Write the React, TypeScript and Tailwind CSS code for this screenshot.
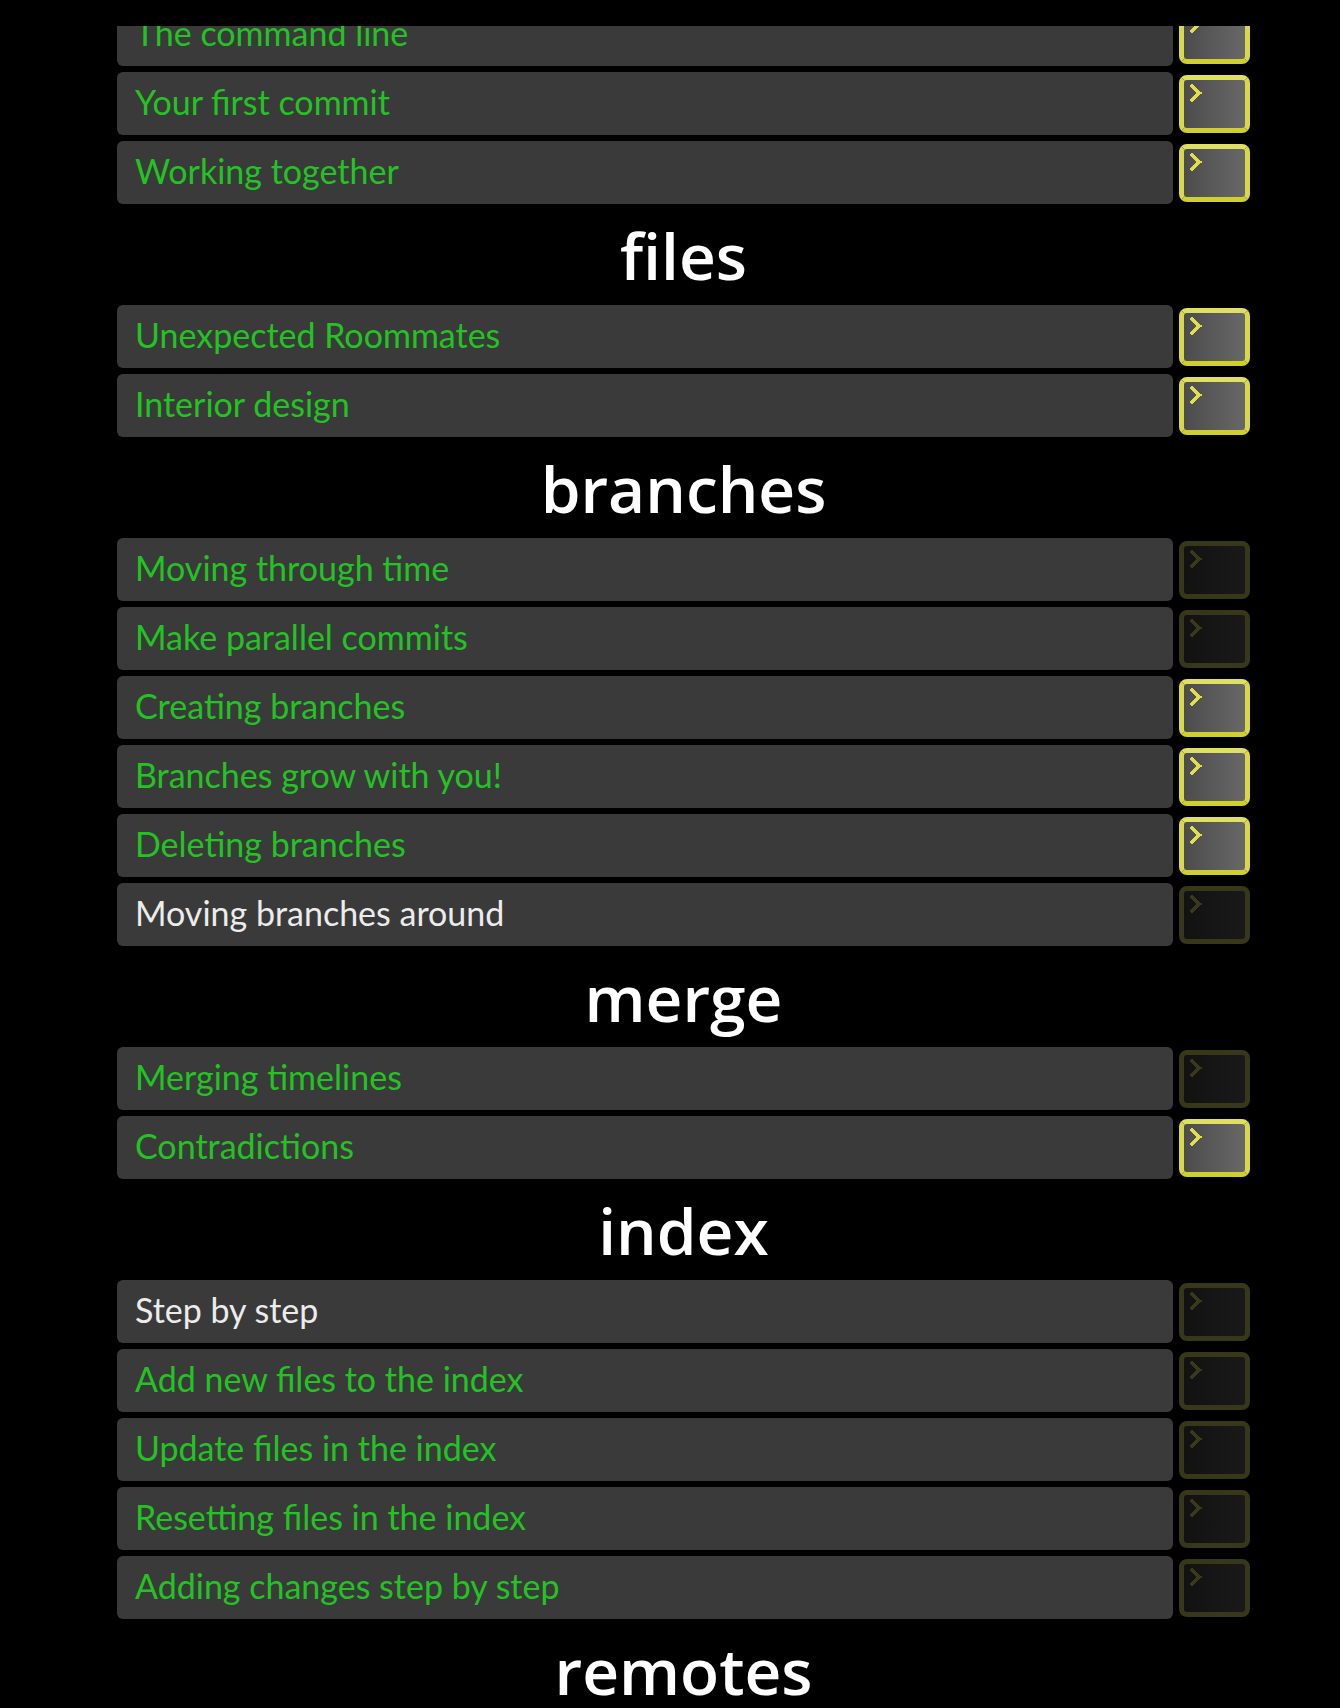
import React from "react";

type Level = { title: string; done: boolean; solved?: boolean };
type Section = { name: string | null; levels: Level[] };

const sections: Section[] = [
  {
    name: null,
    levels: [
      { title: "The command line", done: true },
      { title: "Your first commit", done: true },
      { title: "Working together", done: true },
    ],
  },
  {
    name: "files",
    levels: [
      { title: "Unexpected Roommates", done: true },
      { title: "Interior design", done: true },
    ],
  },
  {
    name: "branches",
    levels: [
      { title: "Moving through time", done: false },
      { title: "Make parallel commits", done: false },
      { title: "Creating branches", done: true },
      { title: "Branches grow with you!", done: true },
      { title: "Deleting branches", done: true },
      { title: "Moving branches around", done: false, solved: false },
    ],
  },
  {
    name: "merge",
    levels: [
      { title: "Merging timelines", done: false },
      { title: "Contradictions", done: true },
    ],
  },
  {
    name: "index",
    levels: [
      { title: "Step by step", done: false, solved: false },
      { title: "Add new files to the index", done: false },
      { title: "Update files in the index", done: false },
      { title: "Resetting files in the index", done: false },
      { title: "Adding changes step by step", done: false },
    ],
  },
  { name: "remotes", levels: [] },
];

function Chevron({ color }: { color: string }) {
  return (
    <svg width="12" height="18" viewBox="0 0 12 18" shapeRendering="crispEdges">
      <polyline
        points="2,2 9.5,9 2,16"
        fill="none"
        stroke={color}
        strokeWidth="3.5"
        strokeLinecap="square"
      />
    </svg>
  );
}

function PlayButton({ active }: { active: boolean }) {
  if (active) {
    return (
      <div className="w-[71px] h-[58px] shrink-0 rounded-[8px] border-[5px] border-[#d8d84a] border-t-[#dfdf66] border-b-[#cfcf30] bg-gradient-to-r from-[#4c4c4c] to-[#686868] pl-[6px] pt-[4px]">
        <Chevron color="#dede4e" />
      </div>
    );
  }
  return (
    <div className="w-[71px] h-[58px] shrink-0 rounded-[8px] border-[5px] border-[#37371a] bg-gradient-to-r from-[#121212] to-[#191919] pl-[6px] pt-[4px]">
      <Chevron color="#3a3a1a" />
    </div>
  );
}

function LevelRow({ level }: { level: Level }) {
  const white = level.solved === false;
  return (
    <div className="flex items-center gap-[6px] mb-[6px]">
      <div className="flex-1 h-[63px] rounded-[6px] bg-[#3a3a3a] flex items-center pl-[18px] pb-[3px]">
        <span
          className={
            "font-['Lato'] text-[34px] leading-none " +
            (white ? "text-[#ececec]" : "text-[#22c322]")
          }
        >
          {level.title}
        </span>
      </div>
      <PlayButton active={level.done} />
    </div>
  );
}

export default function App() {
  return (
    <div className="h-[1708px] overflow-hidden bg-black">
      <div className="fixed top-0 inset-x-0 h-[26px] bg-black z-10" />
      <div className="ml-[117px] w-[1133px] pt-[3px]">
        {sections.map((s, i) => (
          <div key={i}>
            {s.name && (
              <div className="h-[95px] flex items-center justify-center pb-[3px]">
                <h2 className="font-['Open_Sans'] font-semibold text-[64px] leading-none text-white">
                  {s.name}
                </h2>
              </div>
            )}
            {s.levels.map((l) => (
              <LevelRow key={l.title} level={l} />
            ))}
          </div>
        ))}
      </div>
    </div>
  );
}
